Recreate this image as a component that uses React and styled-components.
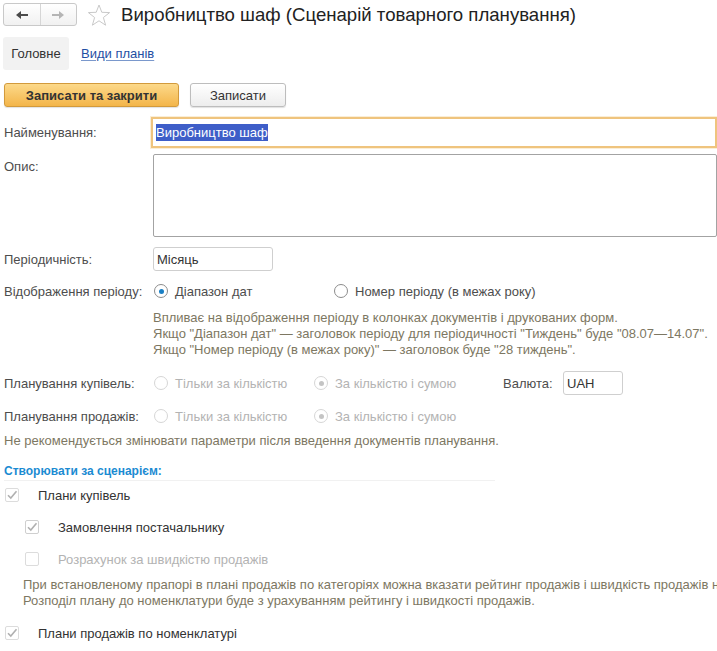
import React from "react";
import styled, { createGlobalStyle } from "styled-components";

const GlobalStyle = createGlobalStyle`
  html, body {
    margin: 0;
    padding: 0;
    background: #fff;
    overflow: hidden;
  }
  body {
    font-family: "Liberation Sans", Arial, sans-serif;
    font-size: 13px;
    color: #333;
  }
`;

const Page = styled.div`
  width: 717px;
  height: 651px;
  overflow: hidden;
  display: flex;
  flex-direction: column;
`;

const TitleBar = styled.div`
  display: flex;
  align-items: center;
  height: 30px;
  padding-left: 3px;
`;

const NavGroup = styled.div`
  display: flex;
  width: 74px;
  height: 23px;
  margin-top: -1px;
  border: 1px solid #c9c9c9;
  border-radius: 3px;
  background: linear-gradient(#ffffff, #f1f1f1);
  box-sizing: border-box;
`;

const NavButton = styled.div`
  flex: 1;
  display: flex;
  align-items: center;
  justify-content: center;
  border-left: ${(p) => (p.divider ? "1px solid #d6d6d6" : "none")};
`;

const Star = styled.div`
  width: 26px;
  height: 26px;
  margin-left: 9px;
  display: flex;
  align-items: center;
  justify-content: center;
`;

const Title = styled.h1`
  margin: 0 0 0 9px;
  font-size: 18.6px;
  font-weight: normal;
  color: #222;
  white-space: nowrap;
`;

const TabBar = styled.div`
  display: flex;
  align-items: center;
  margin-top: 7px;
  padding-left: 3px;
  height: 33px;
`;

const Tab = styled.div`
  height: 33px;
  width: 66px;
  display: flex;
  align-items: center;
  justify-content: center;
  background: #f2f2f2;
  border-radius: 3px;
  color: #333;
`;

const TabLink = styled.div`
  margin-left: 12px;
  color: #1f4fa3;
  text-decoration: underline;
  text-decoration-color: #7a98cc;
  text-underline-offset: 2px;
`;

const CommandBar = styled.div`
  display: flex;
  gap: 11px;
  margin-top: 13px;
  padding-left: 4px;
`;

const Button = styled.div`
  height: 24px;
  box-sizing: border-box;
  display: flex;
  align-items: center;
  justify-content: center;
  width: ${(p) => p.w}px;
  border-radius: 3px;
  border: 1px solid ${(p) => (p.primary ? "#d29a3c" : "#bdbdbd")};
  background: ${(p) =>
    p.primary
      ? "linear-gradient(#fcd98a, #f3b54a)"
      : "linear-gradient(#ffffff, #ededed)"};
  font-weight: ${(p) => (p.primary ? "bold" : "normal")};
  color: #333;
  box-shadow: 0 1px 1px rgba(0, 0, 0, 0.12);
`;

const Form = styled.div`
  display: flex;
  flex-direction: column;
  padding-left: 4px;
  margin-top: 10px;
`;

const Row = styled.div`
  display: flex;
  align-items: ${(p) => (p.top ? "flex-start" : "center")};
  min-height: ${(p) => p.h || 24}px;
  margin-top: ${(p) => p.mt || 0}px;
`;

const Label = styled.div`
  width: ${(p) => p.w || 149}px;
  flex-shrink: 0;
  color: #4d4d4d;
  padding-top: ${(p) => (p.top ? "5px" : "0")};
`;

const NameInput = styled.div`
  width: 580px;
  height: 31px;
  box-sizing: border-box;
  border: 2px solid #efc47e;
  box-shadow: 0 0 0 1px #fbeed6;
  margin-left: -2px;
  display: flex;
  align-items: center;
  padding-left: 3px;
`;

const Selection = styled.span`
  background: #3e5ec8;
  color: #fff;
  padding: 1px 0;
`;

const TextArea = styled.div`
  width: 580px;
  height: 83px;
  box-sizing: border-box;
  border: 1px solid #a3a3a3;
  border-radius: 2px;
  background: #fff;
`;

const Input = styled.div`
  width: ${(p) => p.w}px;
  height: 24px;
  box-sizing: border-box;
  border: 1px solid #cfcfcf;
  border-radius: 3px;
  display: flex;
  align-items: center;
  padding-left: 3px;
  color: #333;
`;

const RadioOption = styled.div`
  display: flex;
  align-items: center;
  width: ${(p) => p.w}px;
  color: ${(p) => (p.disabled ? "#b3b3b3" : "#4d4d4d")};
`;

const RadioCircle = styled.span`
  width: 14px;
  height: 14px;
  box-sizing: border-box;
  border-radius: 50%;
  border: 1px solid ${(p) => (p.disabled ? "#d6d6d6" : "#8c8c8c")};
  background: #fff;
  display: flex;
  align-items: center;
  justify-content: center;
  margin: 0 7px 0 1px;
  flex-shrink: 0;

  &::after {
    content: "";
    display: ${(p) => (p.checked ? "block" : "none")};
    width: 5px;
    height: 5px;
    border-radius: 50%;
    background: ${(p) => (p.disabled ? "#c4c4c4" : "#1a7fc4")};
  }
`;

const Note = styled.div`
  color: #7d7762;
  line-height: 16px;
  padding-left: ${(p) => p.indent || 0}px;
  margin-top: ${(p) => p.mt || 0}px;
  white-space: nowrap;
`;

const SectionTitle = styled.div`
  margin-top: 13px;
  width: 491px;
  height: 18px;
  display: flex;
  align-items: center;
  color: #1b8bd2;
  font-weight: bold;
  font-size: 12px;
  border-bottom: 1px solid #f1f1f1;
`;

const CheckRow = styled.div`
  display: flex;
  align-items: center;
  height: 24px;
  margin-top: ${(p) => p.mt || 0}px;
  padding-left: ${(p) => p.indent || 0}px;
  color: ${(p) => (p.muted ? "#b3b3b3" : "#333")};
`;

const Box = styled.span`
  width: 14px;
  height: 14px;
  box-sizing: border-box;
  border: 1px solid ${(p) => (p.disabled ? "#dcdcdc" : "#cfcfcf")};
  border-radius: 2px;
  margin: 0 19px 0 1px;
  display: flex;
  align-items: center;
  justify-content: center;
  background: #fff;
`;

const Radio = ({ label, checked, disabled, w }) => (
  <RadioOption w={w} disabled={disabled}>
    <RadioCircle checked={checked} disabled={disabled} />
    {label}
  </RadioOption>
);

const Check = ({ label, checked, disabled, muted, indent, mt }) => (
  <CheckRow indent={indent} mt={mt} muted={muted}>
    <Box disabled={disabled}>
      {checked && (
        <svg width="12" height="12" viewBox="0 0 12 12">
          <path d="M2 6.2 L4.8 9 L10.5 2.2" fill="none" stroke="#b0b0b0" strokeWidth="1.6" />
        </svg>
      )}
    </Box>
    {label}
  </CheckRow>
);

export default function App() {
  return (
    <Page>
      <GlobalStyle />
      <TitleBar>
        <NavGroup>
          <NavButton>
            <svg width="14" height="10" viewBox="0 0 14 10">
              <path d="M1 5 L6 1 V4 H13 V6 H6 V9 Z" fill="#4a4a4a" />
            </svg>
          </NavButton>
          <NavButton divider>
            <svg width="14" height="10" viewBox="0 0 14 10">
              <path d="M13 5 L8 1 V4 H1 V6 H8 V9 Z" fill="#b5b5b5" />
            </svg>
          </NavButton>
        </NavGroup>
        <Star>
          <svg width="24" height="23" viewBox="0 0 24 23">
            <path
              d="M12 1 L14.8 8.3 L22.6 8.6 L16.4 13.5 L18.6 21.2 L12 16.8 L5.4 21.2 L7.6 13.5 L1.4 8.6 L9.2 8.3 Z"
              fill="#fff"
              stroke="#c9c9c9"
              strokeWidth="1"
            />
          </svg>
        </Star>
        <Title>Виробництво шаф (Сценарій товарного планування)</Title>
      </TitleBar>

      <TabBar>
        <Tab>Головне</Tab>
        <TabLink>Види планів</TabLink>
      </TabBar>

      <CommandBar>
        <Button primary w={175}>Записати та закрити</Button>
        <Button w={96}>Записати</Button>
      </CommandBar>

      <Form>
        <Row h={31}>
          <Label>Найменування:</Label>
          <NameInput>
            <Selection>Виробництво шаф</Selection>
          </NameInput>
        </Row>
        <Row top mt={6}>
          <Label top>Опис:</Label>
          <TextArea />
        </Row>
        <Row mt={10}>
          <Label>Періодичність:</Label>
          <Input w={120}>Місяць</Input>
        </Row>
        <Row mt={8}>
          <Label>Відображення періоду:</Label>
          <Radio w={180} checked label="Діапазон дат" />
          <Radio label="Номер періоду (в межах року)" />
        </Row>
        <Note indent={149} mt={7}>
          Впливає на відображення періоду в колонках документів і друкованих форм.
          <br />
          Якщо "Діапазон дат" — заголовок періоду для періодичності "Тиждень" буде "08.07—14.07".
          <br />
          Якщо "Номер періоду (в межах року)" — заголовок буде "28 тиждень".
        </Note>
        <Row mt={13}>
          <Label>Планування купівель:</Label>
          <Radio w={160} disabled label="Тільки за кількістю" />
          <Radio w={190} disabled checked label="За кількістю і сумою" />
          <Label w={60}>Валюта:</Label>
          <Input w={60}>UAH</Input>
        </Row>
        <Row mt={9}>
          <Label>Планування продажів:</Label>
          <Radio w={160} disabled label="Тільки за кількістю" />
          <Radio w={190} disabled checked label="За кількістю і сумою" />
        </Row>
        <Note mt={5}>
          Не рекомендується змінювати параметри після введення документів планування.
        </Note>
        <SectionTitle>Створювати за сценарієм:</SectionTitle>
        <Check mt={2} checked disabled label="Плани купівель" />
        <Check mt={8} indent={20} checked label="Замовлення постачальнику" />
        <Check mt={8} indent={20} disabled muted label="Розрахунок за швидкістю продажів" />
        <Note indent={19} mt={6}>
          При встановленому прапорі в плані продажів по категоріях можна вказати рейтинг продажів і швидкість продажів на
          <br />
          Розподіл плану до номенклатури буде з урахуванням рейтингу і швидкості продажів.
        </Note>
        <Check mt={12} checked disabled label="Плани продажів по номенклатурі" />
      </Form>
    </Page>
  );
}
